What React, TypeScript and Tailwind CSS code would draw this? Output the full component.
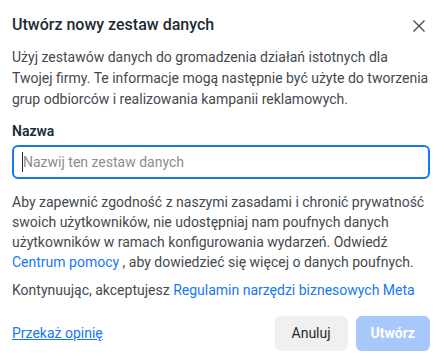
import React from "react";

export default function App() {
  return (
    <div
      className="w-[444px] h-[359px] bg-white pl-3 pr-[14px] text-[#444950]"
      style={{ fontFamily: "Roboto, 'Noto Sans', sans-serif" }}
    >
      {/* Header */}
      <header className="flex items-center justify-between pt-[15px] pb-[12px]">
        <h1 className="text-[16px] font-medium text-[#1c2b33] leading-[20px]">
          Utwórz nowy zestaw danych
        </h1>
        <button className="mr-[5px] mt-[2px] text-[#444950]">
          <svg width="12" height="12" viewBox="0 0 12 12" fill="none">
            <path d="M0.5 0.5L11.5 11.5M11.5 0.5L0.5 11.5" stroke="currentColor" strokeWidth="1.3" />
          </svg>
        </button>
      </header>

      <p className="text-[14px] leading-[21px]">
        Użyj zestawów danych do gromadzenia działań istotnych dla Twojej firmy. Te informacje mogą
        następnie być użyte do tworzenia grup odbiorców i realizowania kampanii reklamowych.
      </p>

      <div className="mt-[12px] flex flex-col gap-[5px]">
        <label className="text-[14px] font-semibold text-[#1c2b33] leading-[18px]">Nazwa</label>
        <div className="h-[34px] rounded-[6px] border-2 border-[#1877f2] flex items-center px-[8px]">
          <span className="w-px h-[20px] bg-[#1c2b33]" />
          <span className="text-[14px] text-[#8a8d91]">Nazwij ten zestaw danych</span>
        </div>
      </div>

      <p className="mt-[13px] text-[14px] leading-[20px]">
        Aby zapewnić zgodność z naszymi zasadami i chronić prywatność swoich użytkowników, nie
        udostępniaj nam poufnych danych użytkowników w ramach konfigurowania wydarzeń. Odwiedź{" "}
        <a className="text-[#1877f2]">Centrum pomocy</a> , aby dowiedzieć się więcej o danych
        poufnych.
      </p>

      <p className="mt-[8px] text-[14px] leading-[20px]">
        Kontynuując, akceptujesz{" "}
        <a className="text-[#1877f2]">Regulamin narzędzi biznesowych Meta</a>
      </p>

      {/* Footer */}
      <footer className="mt-[16px] flex items-center justify-between">
        <a className="text-[14px] text-[#1877f2] underline">Przekaż opinię</a>
        <div className="flex gap-2">
          <button className="h-[35px] px-[17px] rounded-[6px] bg-[#f0f0f0] text-[14px] text-[#1c2b33]">
            Anuluj
          </button>
          <button className="h-[35px] px-[15px] rounded-[6px] bg-[#a6c8fa] text-[14px] font-bold text-white">
            Utwórz
          </button>
        </div>
      </footer>
    </div>
  );
}
